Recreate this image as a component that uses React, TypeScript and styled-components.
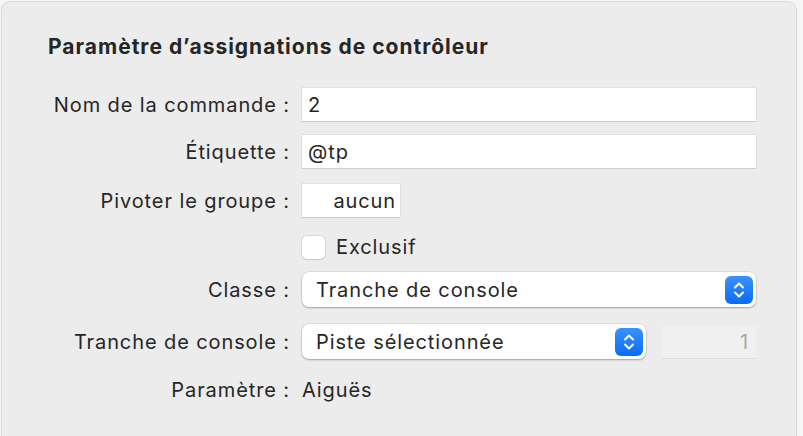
import styled, { createGlobalStyle } from 'styled-components'

const GlobalStyle = createGlobalStyle`
  html, body {
    margin: 0;
    padding: 0;
    overflow: hidden;
    background: #f6f6f6;
  }
  body {
    font-family: Inter, "Liberation Sans", sans-serif;
    color: #262626;
    letter-spacing: 0.9px;
  }
`

const Panel = styled.div`
  margin: 1px 0 0 1px;
  width: 796px;
  height: 435px;
  box-sizing: border-box;
  background: #ececec;
  border: 1px solid #dadada;
  border-bottom: none;
  border-radius: 9px 9px 0 0;
  padding: 32px 0 0 46px;
`

const Title = styled.div`
  font-size: 21px;
  font-weight: 700;
  line-height: 26px;
  letter-spacing: 1px;
  color: #262626;
  margin-bottom: 28px;
`

const Row = styled.div<{ $h: number; $mt: number }>`
  display: grid;
  grid-template-columns: 242px 454px;
  column-gap: 12px;
  align-items: center;
  height: ${(p) => p.$h}px;
  margin-top: ${(p) => p.$mt}px;
`

const Label = styled.div`
  font-size: 20px;
  text-align: right;
  white-space: nowrap;
`

const Cell = styled.div`
  display: flex;
  align-items: center;
  gap: 16px;
  height: 100%;
`

const TextField = styled.div<{ $w?: number; $align?: string }>`
  box-sizing: border-box;
  width: ${(p) => (p.$w ? `${p.$w}px` : '100%')};
  height: 100%;
  background: #fff;
  box-shadow: 0 0 0 0.5px #d4d4d4, 0 1px 0 #c4c4c4;
  font-size: 20px;
  display: flex;
  align-items: center;
  justify-content: ${(p) => (p.$align === 'right' ? 'flex-end' : 'flex-start')};
  padding: 0 4px 0 6px;
`

const NumberField = styled.div`
  box-sizing: border-box;
  width: 94px;
  height: 32px;
  background: #f0f0f0;
  box-shadow: 0 1px 0 #dcdcdc;
  font-size: 20px;
  color: #a8a8a8;
  display: flex;
  align-items: center;
  justify-content: flex-end;
  padding-right: 7px;
`

const Popup = styled.div<{ $w?: number }>`
  box-sizing: border-box;
  width: ${(p) => (p.$w ? `${p.$w}px` : '100%')};
  height: 100%;
  background: #fff;
  border-radius: 7px;
  box-shadow: 0 0 0 0.5px rgba(0, 0, 0, 0.12), 0 1px 2px rgba(0, 0, 0, 0.28);
  display: flex;
  align-items: center;
  justify-content: space-between;
  padding: 0 3px 0 14px;
  font-size: 20px;
`

const Stepper = styled.div`
  width: 28px;
  height: 28px;
  border-radius: 6px;
  background: linear-gradient(#3a92ff, #0a6cf3);
  display: flex;
  align-items: center;
  justify-content: center;
`

const CheckRow = styled.label`
  display: flex;
  align-items: center;
  gap: 11px;
  font-size: 20px;
`

const Box = styled.span`
  width: 23px;
  height: 23px;
  box-sizing: border-box;
  border-radius: 5px;
  background: #fff;
  box-shadow: 0 0 0 0.5px #c8c8c8, 0 0.5px 1px rgba(0, 0, 0, 0.15);
`

const Value = styled.div`
  font-size: 20px;
`

const Chevrons = () => (
  <svg width="14" height="20" viewBox="0 0 14 20" fill="none">
    <path d="M3 7.5 L7 3.5 L11 7.5" stroke="#fff" strokeWidth="2" strokeLinecap="round" strokeLinejoin="round" />
    <path d="M3 12.5 L7 16.5 L11 12.5" stroke="#fff" strokeWidth="2" strokeLinecap="round" strokeLinejoin="round" />
  </svg>
)

const App = () => {
  return (
    <>
      <GlobalStyle />
      <Panel>
        <Title>Paramètre d’assignations de contrôleur</Title>
        <Row $h={33} $mt={0}>
          <Label>Nom de la commande :</Label>
          <Cell>
            <TextField>2</TextField>
          </Cell>
        </Row>
        <Row $h={33} $mt={14}>
          <Label>Étiquette :</Label>
          <Cell>
            <TextField>@tp</TextField>
          </Cell>
        </Row>
        <Row $h={33} $mt={16}>
          <Label>Pivoter le groupe :</Label>
          <Cell>
            <TextField $w={98} $align="right">aucun</TextField>
          </Cell>
        </Row>
        <Row $h={23} $mt={18}>
          <div />
          <CheckRow>
            <Box />
            Exclusif
          </CheckRow>
        </Row>
        <Row $h={35} $mt={14}>
          <Label>Classe :</Label>
          <Cell>
            <Popup>
              Tranche de console
              <Stepper>
                <Chevrons />
              </Stepper>
            </Popup>
          </Cell>
        </Row>
        <Row $h={35} $mt={17}>
          <Label>Tranche de console :</Label>
          <Cell>
            <Popup $w={344}>
              Piste sélectionnée
              <Stepper>
                <Chevrons />
              </Stepper>
            </Popup>
            <NumberField>1</NumberField>
          </Cell>
        </Row>
        <Row $h={24} $mt={19}>
          <Label>Paramètre :</Label>
          <Value>Aiguës</Value>
        </Row>
      </Panel>
    </>
  )
}

export default App
